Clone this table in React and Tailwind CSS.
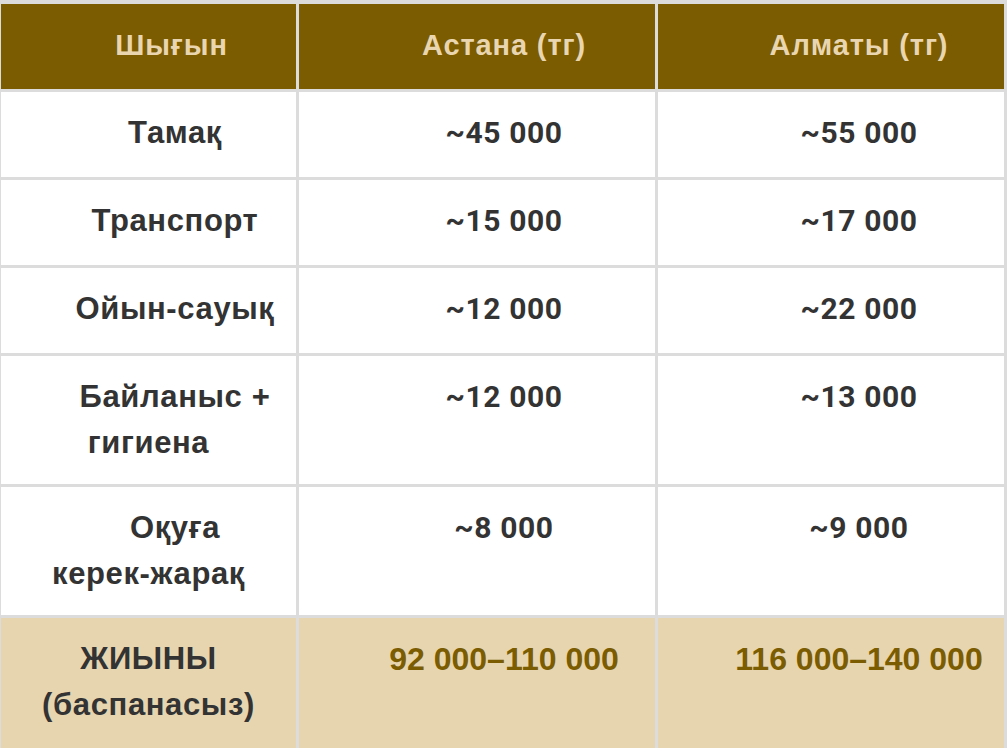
import React from "react";

const label = "font-['Liberation_Sans',Arial,sans-serif] font-bold text-[31px] tracking-[0.02em] leading-[46px] text-[#333333]";
const num = "font-['Roboto',Arial,sans-serif] font-bold text-[30px] tracking-[0.02em] leading-[46px] text-[#333333]";
const total = "font-['Liberation_Sans',Arial,sans-serif] font-bold text-[32px] leading-[46px] text-[#7b5c00]";

const rows = [
  { name: ["Тамақ"], astana: "~45 000", almaty: "~55 000" },
  { name: ["Транспорт"], astana: "~15 000", almaty: "~17 000" },
  { name: ["Ойын-сауық"], astana: "~12 000", almaty: "~22 000" },
  { name: ["Байланыс +", "гигиена"], astana: "~12 000", almaty: "~13 000" },
  { name: ["Оқуға", "керек-жарақ"], astana: "~8 000", almaty: "~9 000" },
];

function HeadCell({ children, pad }) {
  return (
    <div className={`bg-[#7b5c00] flex items-center justify-center ${pad}`}>
      <span className="font-['Liberation_Sans',Arial,sans-serif] font-bold text-[29px] tracking-[0.03em] text-[#e9d6b0] pb-[2px]">
        {children}
      </span>
    </div>
  );
}

export default function App() {
  return (
    <div className="w-[1007px] h-[748px] overflow-hidden bg-white">
      <div className="grid grid-cols-[295px_356px_346px] grid-rows-[85px_85px_85px_85px_128px_128px_130px] gap-[3px] bg-[#dcdcdc] pt-1 pl-px pr-[3px]">
        <HeadCell pad="pl-[46px]">Шығын</HeadCell>
        <HeadCell pad="pl-[54px]">Астана (тг)</HeadCell>
        <HeadCell pad="pl-[56px]">Алматы (тг)</HeadCell>

        {rows.map((r) => (
          <React.Fragment key={r.name[0]}>
            <div className="bg-white pt-[18px]">
              {r.name.map((line, i) => (
                <div key={line} className={`${label} text-center ${i === 0 ? "pl-[53px]" : ""}`}>
                  {line}
                </div>
              ))}
            </div>
            <div className={`bg-white pt-[18px] pl-[54px] text-center ${num}`}>{r.astana}</div>
            <div className={`bg-white pt-[18px] pl-[56px] text-center ${num}`}>{r.almaty}</div>
          </React.Fragment>
        ))}

        {/* Total */}
        <div className="bg-[#e7d5b0] pt-[18px]">
          <div className={`${label} text-center`}>ЖИЫНЫ</div>
          <div className={`${label} text-center`}>(баспанасыз)</div>
        </div>
        <div className={`bg-[#e7d5b0] pt-[18px] pl-[54px] text-center ${total}`}>92 000–110 000</div>
        <div className={`bg-[#e7d5b0] pt-[18px] pl-[56px] text-center ${total}`}>116 000–140 000</div>
      </div>
    </div>
  );
}
